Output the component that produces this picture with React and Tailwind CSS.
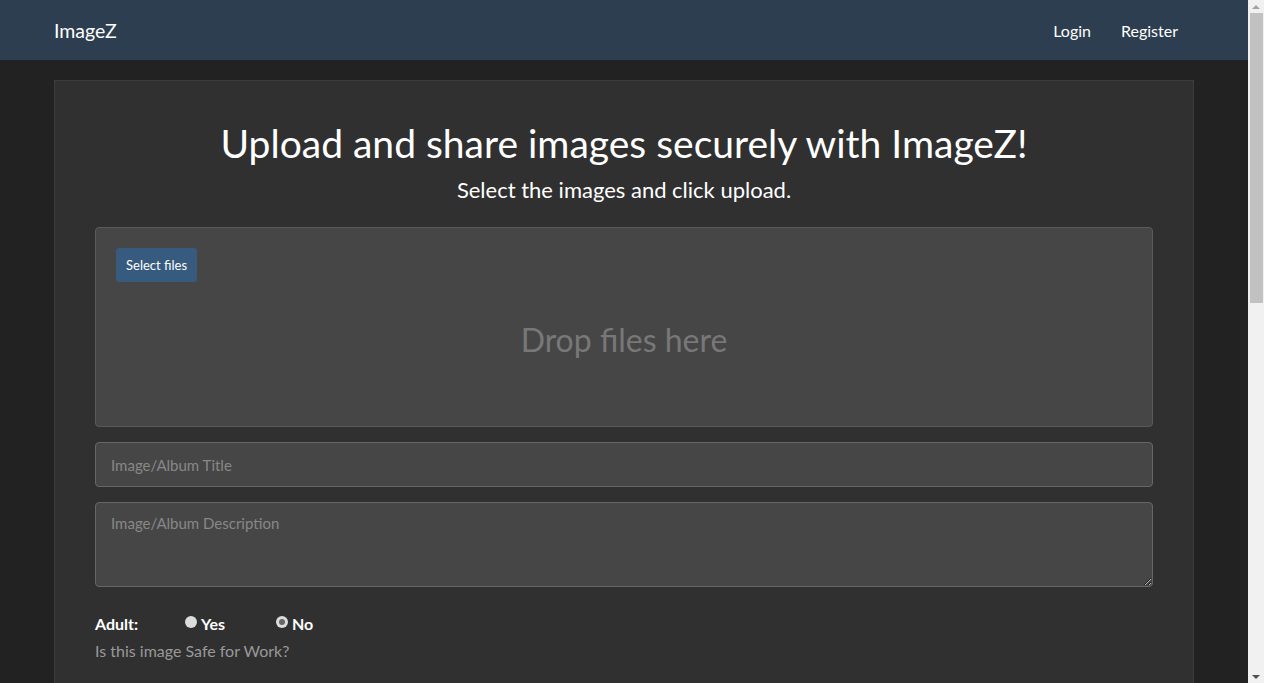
import { useState } from "react";

function Radio({ checked, label, onClick }) {
  return (
    <label className="flex cursor-pointer items-center gap-[4px]" onClick={onClick}>
      <span className="relative -mt-[3px] flex h-[12px] w-[12px] items-center justify-center rounded-full bg-[#dcdcdc]">
        {checked && <span className="h-[6px] w-[6px] rounded-full bg-[#666]" />}
      </span>
      <span className="font-bold text-white">{label}</span>
    </label>
  );
}

function Scrollbar() {
  return (
    <div className="flex h-full w-[16px] shrink-0 flex-col items-center bg-[#f1f1f1]">
      <div className="flex h-[13px] w-full items-center justify-center">
        <span className="h-0 w-0 border-x-[4px] border-b-[4px] border-x-transparent border-b-[#a3a3a3]" />
      </div>
      <div className="h-[290px] w-[13px] bg-[#c1c1c1]" />
      <div className="flex-1" />
      <div className="flex h-[13px] w-full items-center justify-center">
        <span className="h-0 w-0 border-x-[4px] border-t-[4px] border-x-transparent border-t-[#505050]" />
      </div>
    </div>
  );
}

export default function App() {
  const [adult, setAdult] = useState("no");

  return (
    <div
      className="flex h-[683px] overflow-hidden bg-[#222222] text-[16px] text-white"
      style={{ fontFamily: "Lato, 'Open Sans', sans-serif" }}
    >
      <div className="min-w-0 flex-1 overflow-hidden">
        <nav className="h-[60px] bg-[#2c3e50]">
          <div className="mx-auto flex h-full w-[1140px] items-center justify-between pt-[1px]">
            <a className="text-[19.5px] leading-none text-white">ImageZ</a>
            <div className="flex">
              <a className="px-[15px] text-white">Login</a>
              <a className="pl-[15px] pr-[16px] text-white">Register</a>
            </div>
          </div>
        </nav>

        <main className="mx-auto mt-[20px] w-[1140px]">
          <div className="h-[800px] border border-[#3c3c3c] bg-[#303030] px-[40px] pt-[36px]">
            <h1 className="text-center text-[39px] leading-[52px] text-white">
              Upload and share images securely with ImageZ!
            </h1>
            <p className="mt-[6px] text-center text-[22px] leading-[30px] text-white">
              Select the images and click upload.
            </p>

            <div className="mt-[22px] flex h-[200px] flex-col rounded-[4px] border border-[#5a5a5a] bg-[#464646] px-[20px] pt-[20px]">
              <div>
                <button className="rounded-[3px] bg-[#375a7f] px-[10px] py-[7px] text-[13px] leading-[20px] text-white">
                  Select files
                </button>
              </div>
              <div className="mt-[36px] text-center text-[32px] leading-[44px] text-[#787878]">
                Drop files here
              </div>
            </div>

            <input
              className="mt-[15px] block h-[45px] w-full rounded-[4px] border border-[#666] bg-[#464646] px-[15px] text-[15px] text-white placeholder:text-[#888] focus:outline-none"
              placeholder="Image/Album Title"
            />

            <textarea
              className="mt-[15px] block h-[85px] w-full rounded-[4px] border border-[#666] bg-[#464646] px-[15px] py-[10px] text-[15px] leading-[21px] text-white placeholder:text-[#888] focus:outline-none"
              placeholder="Image/Album Description"
            />

            <div className="mt-[26px] flex items-center leading-[21px]">
              <span className="w-[90px] font-bold">Adult:</span>
              <div className="w-[91px]">
                <Radio checked={adult === "yes"} label="Yes" onClick={() => setAdult("yes")} />
              </div>
              <Radio checked={adult === "no"} label="No" onClick={() => setAdult("no")} />
            </div>
            <p className="mt-[6px] leading-[21px] text-[#999]">Is this image Safe for Work?</p>
          </div>
        </main>
      </div>
      <Scrollbar />
    </div>
  );
}
